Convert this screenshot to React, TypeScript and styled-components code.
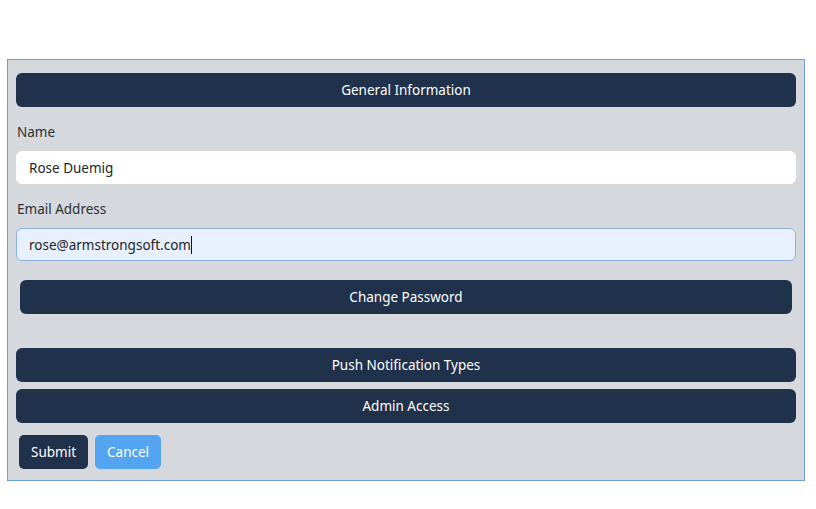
import styled, { createGlobalStyle } from "styled-components";

const GlobalStyle = createGlobalStyle`
  body {
    margin: 0;
    background: #ffffff;
    font-family: "Noto Sans", "Open Sans", sans-serif;
  }
`;

const Page = styled.div`
  padding: 59px 11px 28px 7px;
`;

const Panel = styled.form`
  background-color: #d5d8dd;
  border: 1px solid #6b9fd9;
  padding: 13px 8px 11px 8px;
  display: flex;
  flex-direction: column;
`;

const SectionBar = styled.button<{ $inset?: boolean; $gap?: number }>`
  height: 34px;
  margin: ${(p) => (p.$gap ?? 0)}px ${(p) => (p.$inset ? 4 : 0)}px 0;
  background-color: #20314b;
  color: #ffffff;
  border: none;
  border-radius: 6px;
  font-family: inherit;
  font-size: 13.5px;
  cursor: pointer;
`;

const Label = styled.label<{ $gap: number }>`
  display: block;
  margin: ${(p) => p.$gap}px 0 0 1px;
  height: 20px;
  line-height: 20px;
  font-size: 13.5px;
  color: #2c2f33;
`;

const Field = styled.input<{ $filled?: boolean }>`
  box-sizing: border-box;
  margin-top: 9px;
  height: 33px;
  width: 100%;
  padding: 0 12px;
  border-radius: 6px;
  border: 1px solid ${(p) => (p.$filled ? "#8fb1e0" : "#ffffff")};
  background-color: ${(p) => (p.$filled ? "#e8f0fe" : "#ffffff")};
  font-family: inherit;
  font-size: 13.5px;
  color: #212529;
  outline: none;
`;

const FieldWrap = styled.div`
  position: relative;
`;

const Caret = styled.span`
  position: absolute;
  left: 175px;
  top: 17px;
  width: 1px;
  height: 18px;
  background: #111;
`;

const Actions = styled.div`
  display: flex;
  gap: 7px;
  margin: 12px 0 0 3px;
`;

const ActionButton = styled.button<{ $variant: "dark" | "light" }>`
  height: 34px;
  padding: 0 12px;
  border: none;
  border-radius: 5px;
  background-color: ${(p) => (p.$variant === "dark" ? "#20314b" : "#53a4f1")};
  color: #ffffff;
  font-family: inherit;
  font-size: 13.5px;
  cursor: pointer;
`;

export default function App() {
  return (
    <>
      <GlobalStyle />
      <Page>
        <Panel onSubmit={(e) => e.preventDefault()}>
          <SectionBar type="button">General Information</SectionBar>
          <Label $gap={15}>Name</Label>
          <Field defaultValue="Rose Duemig" />
          <Label $gap={15}>Email Address</Label>
          <FieldWrap>
            <Field $filled defaultValue="rose@armstrongsoft.com" />
            <Caret />
          </FieldWrap>
          <SectionBar type="button" $inset $gap={19}>
            Change Password
          </SectionBar>
          <SectionBar type="button" $gap={34}>
            Push Notification Types
          </SectionBar>
          <SectionBar type="button" $gap={7}>
            Admin Access
          </SectionBar>
          <Actions>
            <ActionButton type="submit" $variant="dark">
              Submit
            </ActionButton>
            <ActionButton type="button" $variant="light">
              Cancel
            </ActionButton>
          </Actions>
        </Panel>
      </Page>
    </>
  );
}
